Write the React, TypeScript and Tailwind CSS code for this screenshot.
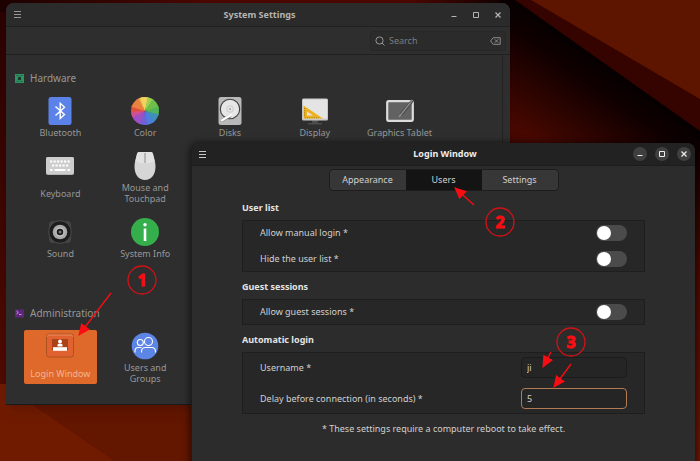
import React, { useState } from 'react';

const TABS = ['Appearance', 'Users', 'Settings'];

function MenuIcon() {
  return (
    <svg width="7" height="7" viewBox="0 0 7 7" fill="none" stroke="currentColor">
      <path d="M0 .5h7M0 3.5h7M0 6.5h7" />
    </svg>
  );
}

function WindowButtons({ active }: { active?: boolean }) {
  const base = 'flex size-3.5 items-center justify-center rounded-full';
  const cls = active ? `${base} bg-[#3f3f3f] text-[#eeeeee]` : `${base} text-[#b5b5b5]`;
  return (
    <div className="flex gap-2">
      <button className={cls} aria-label="Minimize">
        <svg width="6" height="6" viewBox="0 0 6 6" stroke="currentColor" fill="none"><path d="M.5 4.5h5" /></svg>
      </button>
      <button className={cls} aria-label="Maximize">
        <svg width="6" height="6" viewBox="0 0 6 6" stroke="currentColor" fill="none"><path d="M.5.5h5v5h-5z" /></svg>
      </button>
      <button className={cls} aria-label="Close">
        <svg width="6" height="6" viewBox="0 0 6 6" stroke="currentColor" fill="none" strokeWidth="1.2"><path d="M.5.5l5 5M5.5.5l-5 5" /></svg>
      </button>
    </div>
  );
}

function BluetoothIcon() {
  return (
    <svg width="28" height="28" viewBox="0 0 28 28">
      <rect x="2.5" width="23" height="28" rx="2.5" fill="#5a82e8" />
      <path d="M9.5 9.5l9 8-4.3 4V6.3l4.3 4-9 8.2" fill="none" stroke="#fff" strokeWidth="1.4" />
    </svg>
  );
}

function ColorIcon() {
  return (
    <svg width="28" height="28" viewBox="0 0 28 28">
      <clipPath id="wheel"><circle cx="14" cy="14" r="14" /></clipPath>
      <g clipPath="url(#wheel)">
        <path d="M14 14L4 0H14z" fill="#e8b04a" />
        <path d="M14 14L8 -2H18z" fill="#efd35e" />
        <path d="M14 14L17 -2H26z" fill="#9fd052" />
        <path d="M14 14L23 0L30 12z" fill="#6cc04a" />
        <path d="M14 14L30 9V20z" fill="#53b35c" />
        <path d="M14 14L30 18L24 30z" fill="#3f8fbb" />
        <path d="M14 14L26 27L15 30z" fill="#4a7fdc" />
        <path d="M14 14L17 30H6z" fill="#6d63d6" />
        <path d="M14 14L8 30L-2 20z" fill="#a04fc4" />
        <path d="M14 14L-2 22V13z" fill="#d3508f" />
        <path d="M14 14L-2 15V6z" fill="#e2503f" />
        <path d="M14 14L-2 9L6 -1z" fill="#e9813f" />
      </g>
    </svg>
  );
}

function DisksIcon() {
  return (
    <svg width="28" height="28" viewBox="0 0 28 28">
      <rect x="2.5" width="23" height="28" rx="2.5" fill="#b9b9b9" />
      <circle cx="14" cy="12" r="9.7" fill="#e6e6e6" stroke="#3d3d3d" strokeWidth="1.1" />
      <circle cx="14" cy="12" r="3.3" fill="none" stroke="#c4c4c4" strokeWidth=".8" />
      <circle cx="14" cy="12" r="1" fill="#a0a0a0" />
      <path d="M6.5 23L14 19" stroke="#777" strokeWidth="3" strokeLinecap="round" />
      <path d="M6 23.200L15 18" stroke="#fff" strokeWidth="2.2" strokeLinecap="round" />
    </svg>
  );
}

function DisplayIcon() {
  return (
    <svg width="28" height="28" viewBox="0 0 28 28">
      <path d="M11 23h6v3h4v1.5H7V26h4z" fill="#4c4c4c" />
      <rect x="1" y="1.5" width="26" height="22" rx="1.5" fill="#c9c9c9" />
      <rect x="2" y="2.5" width="24" height="19" fill="#e4e4e4" />
      <path d="M2.500 8.500L22 21.500H2.500zM6 14.500v4h6z" fill="#ecb21f" fillRule="evenodd" />
      <path d="M4 20.800h14M3.500 11v9" stroke="#a37a18" strokeDasharray="1 1.2" />
    </svg>
  );
}

function TabletIcon() {
  return (
    <svg width="28" height="28" viewBox="0 0 28 28">
      <rect x="1.2" y="4.2" width="25.6" height="19.6" rx="1.5" fill="#626262" stroke="#dcdcdc" strokeWidth="2.2" />
      <path d="M15 17.500L26.5 3.500" stroke="#444" strokeWidth="2.800" />
      <path d="M13 20L26.5 3" stroke="#8c8c8c" strokeWidth="1.4" />
    </svg>
  );
}

function KeyboardIcon() {
  return (
    <svg width="28" height="28" viewBox="0 0 28 28">
      <rect y="5" width="28" height="18" rx="2" fill="#b4b4b4" />
      <rect y="5" width="28" height="17" rx="2" fill="#cdcdcd" />
      <path d="M4 9.5h20M6 13.5h17" stroke="#fff" strokeWidth="2.2" strokeDasharray="2.2 1.3" />
      <path d="M4 18h2.5M8.5 18h11M21.5 18H24" stroke="#fff" strokeWidth="2.2" />
    </svg>
  );
}

function MouseIcon() {
  return (
    <svg width="28" height="28" viewBox="0 0 28 28">
      <path d="M8 0h12q1.500 0 2 2c1 4 2.500 8 2.500 12.500C24.500 23 20 28 14 28S3.500 23 3.500 14.500C3.500 10 5 6 6 2q.5-2 2-2z" fill="#d6d6d6" />
      <path d="M8 0h12q1.500 0 2 2l1.500 7q-9.500 5-19 0L6 2q.5-2 2-2z" fill="#e2e2e2" />
      <path d="M14 1v10" stroke="#8d8d8d" />
    </svg>
  );
}

function SoundIcon() {
  return (
    <svg width="28" height="28" viewBox="0 0 28 28">
      <rect x="3" y="3" width="22" height="22" rx="4" fill="#454545" />
      <circle cx="14" cy="14" r="11.3" fill="#1d1d1d" stroke="#4d4d4d" />
      <circle cx="14" cy="14" r="7.3" fill="#a9a9a9" />
      <circle cx="14" cy="14" r="4.5" fill="#c9c9c9" />
      <circle cx="14" cy="14" r="3.3" fill="#1a1a1a" />
      <circle cx="14" cy="14" r="1.5" fill="#777" />
    </svg>
  );
}

function InfoIcon() {
  return (
    <svg width="28" height="28" viewBox="0 0 28 28">
      <circle cx="14" cy="14" r="14" fill="#35ae4c" />
      <circle cx="14" cy="6.7" r="1.7" fill="#fff" />
      <path d="M14 10.5v12.5" stroke="#fff" strokeWidth="2.6" />
    </svg>
  );
}

function LoginIcon() {
  return (
    <svg width="28" height="28" viewBox="0 0 28 28">
      <rect x=".5" y="2" width="27" height="23" rx="2.5" fill="#df6230" stroke="#b0501f" />
      <path d="M1.500 4.500q0-1.500 1.500-1.500h22q1.500 0 1.500 1.500" fill="none" stroke="#f09a70" strokeWidth=".8" />
      <rect x="6" y="7" width="16" height="11" fill="#ac4318" />
      <circle cx="14" cy="9.500" r="1.900" fill="#fff" />
      <path d="M11.500 14.500v-1.500q0-1.300 1.300-1.300h2.400q1.300 0 1.300 1.300v1.500z" fill="#fff" />
      <rect x="7" y="15.200" width="14" height="3.600" fill="#fff" />
    </svg>
  );
}

function UsersIcon() {
  return (
    <svg width="28" height="28" viewBox="0 0 28 28">
      <circle cx="14" cy="14" r="13.3" fill="#5c85e6" />
      <g fill="none" stroke="#fff" strokeWidth="1.1">
        <circle cx="9.3" cy="10.5" r="3" />
        <circle cx="17.5" cy="9.5" r="4" />
        <path d="M4 20.500v-1.500q0-3.500 3.500-3.500h3M10.500 20.500v-1q0-4 4-4h6q4 0 4 4v1" />
      </g>
    </svg>
  );
}

const HARDWARE = [
  { name: 'Bluetooth', icon: <BluetoothIcon /> },
  { name: 'Color', icon: <ColorIcon /> },
  { name: 'Disks', icon: <DisksIcon /> },
  { name: 'Display', icon: <DisplayIcon /> },
  { name: 'Graphics Tablet', icon: <TabletIcon /> },
  { name: 'Keyboard', icon: <KeyboardIcon /> },
  { name: 'Mouse and Touchpad', icon: <MouseIcon /> },
];

// the remaining columns of this group are covered by the login window
const HARDWARE_MORE = [
  { name: 'Sound', icon: <SoundIcon /> },
  { name: 'System Info', icon: <InfoIcon /> },
];

const ADMIN = [
  { name: 'Login Window', icon: <LoginIcon />, selected: true },
  { name: 'Users and Groups', icon: <UsersIcon /> },
];

type Item = { name: string; icon: React.ReactNode; selected?: boolean };

function IconGrid({ items }: { items: Item[] }) {
  return (
    <div className="ml-[18px] grid max-w-[412px] grid-cols-5 gap-3">
      {items.map(item => (
        <button
          key={item.name}
          className={`flex flex-col items-center rounded-xs pt-0.5 text-[9px] leading-[11px] ${item.selected ? 'bg-[#df682b] text-[#f3b592]' : 'text-[#979797]'}`}
        >
          {item.icon}
          <span className={`mt-0.5 flex grow items-center ${item.name.includes(' and ') ? 'px-2' : 'whitespace-nowrap'}`}>{item.name}</span>
        </button>
      ))}
    </div>
  );
}

function SettingsWindow() {
  const [query, setQuery] = useState('');

  return (
    <section className="absolute top-[3px] left-[6px] w-[72%] rounded-t-lg border-b border-[#191919] bg-[#2e2e2e] text-[#979797] shadow-lg">
      <header className="grid h-6 grid-cols-[1fr_auto_1fr] items-center rounded-t-lg border-b border-[#202020] bg-[#2b2b2b] pr-[5px] pl-2">
        <button aria-label="Menu" className="w-fit"><MenuIcon /></button>
        <h1 className="text-[9px] font-bold text-[#b5b5b5]">System Settings</h1>
        <div className="flex justify-end"><WindowButtons /></div>
      </header>
      <div className="flex h-7 items-center justify-end border-b border-[#202020] px-1">
        <label className="flex h-5 w-[136px] items-center gap-1 rounded-xs border border-[#272727] bg-[#2b2b2b] px-1">
          <svg width="10" height="10" viewBox="0 0 10 10" fill="none" stroke="currentColor"><circle cx="4.5" cy="4.5" r="3.6" /><path d="M7 7l2.5 2.5" /></svg>
          <input
            aria-label="Search"
            placeholder="Search"
            value={query}
            onChange={e => setQuery(e.target.value)}
            className="w-0 grow bg-transparent text-[9px] outline-none placeholder:text-[#7d7d7d]"
          />
          <button aria-label="Clear" onClick={() => setQuery('')}>
            <svg width="11" height="8" viewBox="0 0 11 8" fill="none" stroke="currentColor" strokeWidth=".9"><path d="M3.2.7h7v6.6h-7L.6 4zM4.8 2.3l3.4 3.4M8.2 2.3L4.8 5.7" /></svg>
          </button>
        </label>
      </div>
      <div className="mr-[7px] border-r border-[#222222] pt-[15px] pb-5">
        <h2 className="mb-[9px] flex h-4 items-center gap-1.5 pl-[9px] text-[10px]">
          <svg width="9" height="9" viewBox="0 0 9 9"><rect width="9" height="9" fill="#2f9263" /><path d="M1.5 1.5h2M5.5 1.5h2M1.5 7.5h2M5.5 7.5h2M4.5 2.5v4" stroke="#1f6042" /><rect x="3" y="3" width="3" height="3" fill="#173f2c" /></svg>
          Hardware
        </h2>
        <IconGrid items={HARDWARE} />
        <div className="mt-3"><IconGrid items={HARDWARE_MORE} /></div>
        <h2 className="mt-[46px] mb-[9px] flex h-4 items-center gap-1.5 pl-[9px] text-[10px]">
          <svg width="9" height="9" viewBox="0 0 9 9"><rect y=".5" width="9" height="8" fill="#60267f" /><path d="M1.5 2l1.8 1.5L1.5 5M4 5.5h2.5" fill="none" stroke="#d9c3e5" strokeWidth=".8" /></svg>
          Administration
        </h2>
        <IconGrid items={ADMIN} />
      </div>
    </section>
  );
}

function SwitchRow({ label }: { label: string }) {
  const [on, setOn] = useState(false);
  return (
    <label className="flex h-[26px] items-center justify-between">
      {label}
      <input
        type="checkbox"
        role="switch"
        checked={on}
        onChange={e => setOn(e.target.checked)}
        className="h-4 w-[31px] appearance-none rounded-full bg-[#4b4b4b] p-px before:block before:size-3.5 before:rounded-full before:bg-white checked:bg-[#df682b] checked:before:ml-auto"
      />
    </label>
  );
}

function Section({ title, children }: { title: string; children: React.ReactNode }) {
  return (
    <section>
      <h2 className="mb-1 flex h-4 items-center font-bold text-[#e4e4e4]">{title}</h2>
      <div className="bg-[#272727] px-[18px] ring-1 ring-[#1e1e1e] ring-inset">{children}</div>
    </section>
  );
}

function LoginWindow() {
  const [tab, setTab] = useState('Users');
  const [username, setUsername] = useState('ji');
  const [delay, setDelay] = useState('5');
  const field = 'h-[21px] w-[106px] rounded-sm bg-[#252525] px-[5px] text-[#d0d0d0] outline-none';

  return (
    <section className="absolute top-[143px] right-[5px] w-[72%] rounded-t-lg border-l border-[#1d1d1d] bg-[#2c2c2c] pb-10 text-[9px] text-[#d0d0d0] shadow-[0_1px_6px_2px_rgba(0,0,0,0.5)]">
      <header className="grid h-[23px] grid-cols-[1fr_auto_1fr] items-center rounded-t-lg border-b border-[#1c1c1c] bg-[#222222] pr-1 pl-[7px]">
        <button aria-label="Menu" className="w-fit text-[#c8c8c8]"><MenuIcon /></button>
        <h1 className="font-bold text-[#eeeeee]">Login Window</h1>
        <div className="flex justify-end"><WindowButtons active /></div>
      </header>
      <nav className="mt-[3px] flex justify-center">
        <div className="grid h-[22px] w-[230px] grid-cols-3 overflow-hidden rounded-sm border border-[#1d1d1d] bg-[#373737]">
          {TABS.map(t => (
            <button key={t} onClick={() => setTab(t)} className={tab === t ? 'bg-[#141414]' : ''}>{t}</button>
          ))}
        </div>
      </nav>
      <div className="mt-[9px] flex flex-col gap-[7px] px-[50px]">
        <Section title="User list">
          <SwitchRow label="Allow manual login *" />
          <SwitchRow label="Hide the user list *" />
        </Section>
        <Section title="Guest sessions">
          <SwitchRow label="Allow guest sessions *" />
        </Section>
        <Section title="Automatic login">
          <label className="flex h-[31px] items-center justify-between">
            Username *
            <input className={`${field} border border-[#1c1c1c]`} value={username} onChange={e => setUsername(e.target.value)} />
          </label>
          <label className="flex h-[31px] items-center justify-between">
            Delay before connection (in seconds) *
            <input className={`${field} border border-[#b27a55]`} value={delay} onChange={e => setDelay(e.target.value)} />
          </label>
        </Section>
        <p className="text-center leading-4">* These settings require a computer reboot to take effect.</p>
      </div>
    </section>
  );
}

function Step({ n, x, y }: { n: number; x: number; y: number }) {
  return (
    <g>
      <circle cx={x} cy={y} r="14" fill="none" stroke="#d31216" strokeWidth="1.3" />
      <text x={x} y={y + 6} textAnchor="middle" fill="#f80d12" stroke="#f80d12" strokeWidth="1" className="font-['Noto_Sans',sans-serif] text-[16px] font-bold">{n}</text>
    </g>
  );
}

export default function App() {
  return (
    <main className="relative min-h-screen w-full overflow-hidden bg-[#4a0b00] font-['Noto_Sans','Open_Sans',sans-serif]">
      <svg className="absolute inset-0 size-full" viewBox="0 0 700 461" preserveAspectRatio="none" aria-hidden="true">
        <defs>
          <linearGradient id="shade" gradientUnits="userSpaceOnUse" x1="607" y1="65" x2="548" y2="148">
            <stop offset="0" stopColor="#060000" />
            <stop offset=".25" stopColor="#100000" />
            <stop offset="1" stopColor="#470800" />
          </linearGradient>
          <linearGradient id="left" x1="0" y1="0" x2="0" y2="1">
            <stop offset="0" stopColor="#2a0200" />
            <stop offset="1" stopColor="#560c00" />
          </linearGradient>
          <linearGradient id="top" x1="0" y1="0" x2="1" y2="0">
            <stop offset="0" stopColor="#1c0100" />
            <stop offset=".4" stopColor="#4a0700" />
            <stop offset=".8" stopColor="#4a0700" />
            <stop offset="1" stopColor="#0a0000" />
          </linearGradient>
          <linearGradient id="right" x1="0" y1="0" x2="0" y2="1">
            <stop offset="0" stopColor="#0c0000" />
            <stop offset=".4" stopColor="#4a0900" />
            <stop offset="1" stopColor="#6c1700" />
          </linearGradient>
        </defs>
        <path d="M0 0h700v461H0z" fill="url(#left)" />
        <path d="M0 0h515v12H0z" fill="url(#top)" />
        <path d="M500 0h200v461H500z" fill="url(#shade)" />
        <path d="M690 140h10v321h-10z" fill="url(#right)" />
        <path d="M515 0h185v131z" fill="#350400" />
        <path d="M531 0h169v99z" fill="#5e1500" />
        <path d="M0 384h6l26 20 83 57H0z" fill="#701b00" />
        <path d="M32 404h160v57h-77z" fill="#631600" />
      </svg>
      <SettingsWindow />
      <LoginWindow />
      <svg className="pointer-events-none absolute top-0 left-0" width="700" height="461" viewBox="0 0 700 461">
        <defs>
          <marker id="head" viewBox="0 0 12 11" refX="11" refY="5.5" markerWidth="12" markerHeight="11" markerUnits="userSpaceOnUse" orient="auto">
            <path d="M0 0l12 5.5L0 11z" fill="#f80d12" />
          </marker>
        </defs>
        <g stroke="#f80d12" strokeWidth="1.3">
          <path d="M111 293L79 335" markerEnd="url(#head)" />
          <path d="M474 205L455 188" markerEnd="url(#head)" />
          <path d="M551 352L543 367" markerEnd="url(#head)" />
          <path d="M571 364L554 387" markerEnd="url(#head)" />
        </g>
        <Step n={1} x={142} y={280} />
        <Step n={2} x={500} y={222} />
        <Step n={3} x={571} y={342} />
      </svg>
    </main>
  );
}
